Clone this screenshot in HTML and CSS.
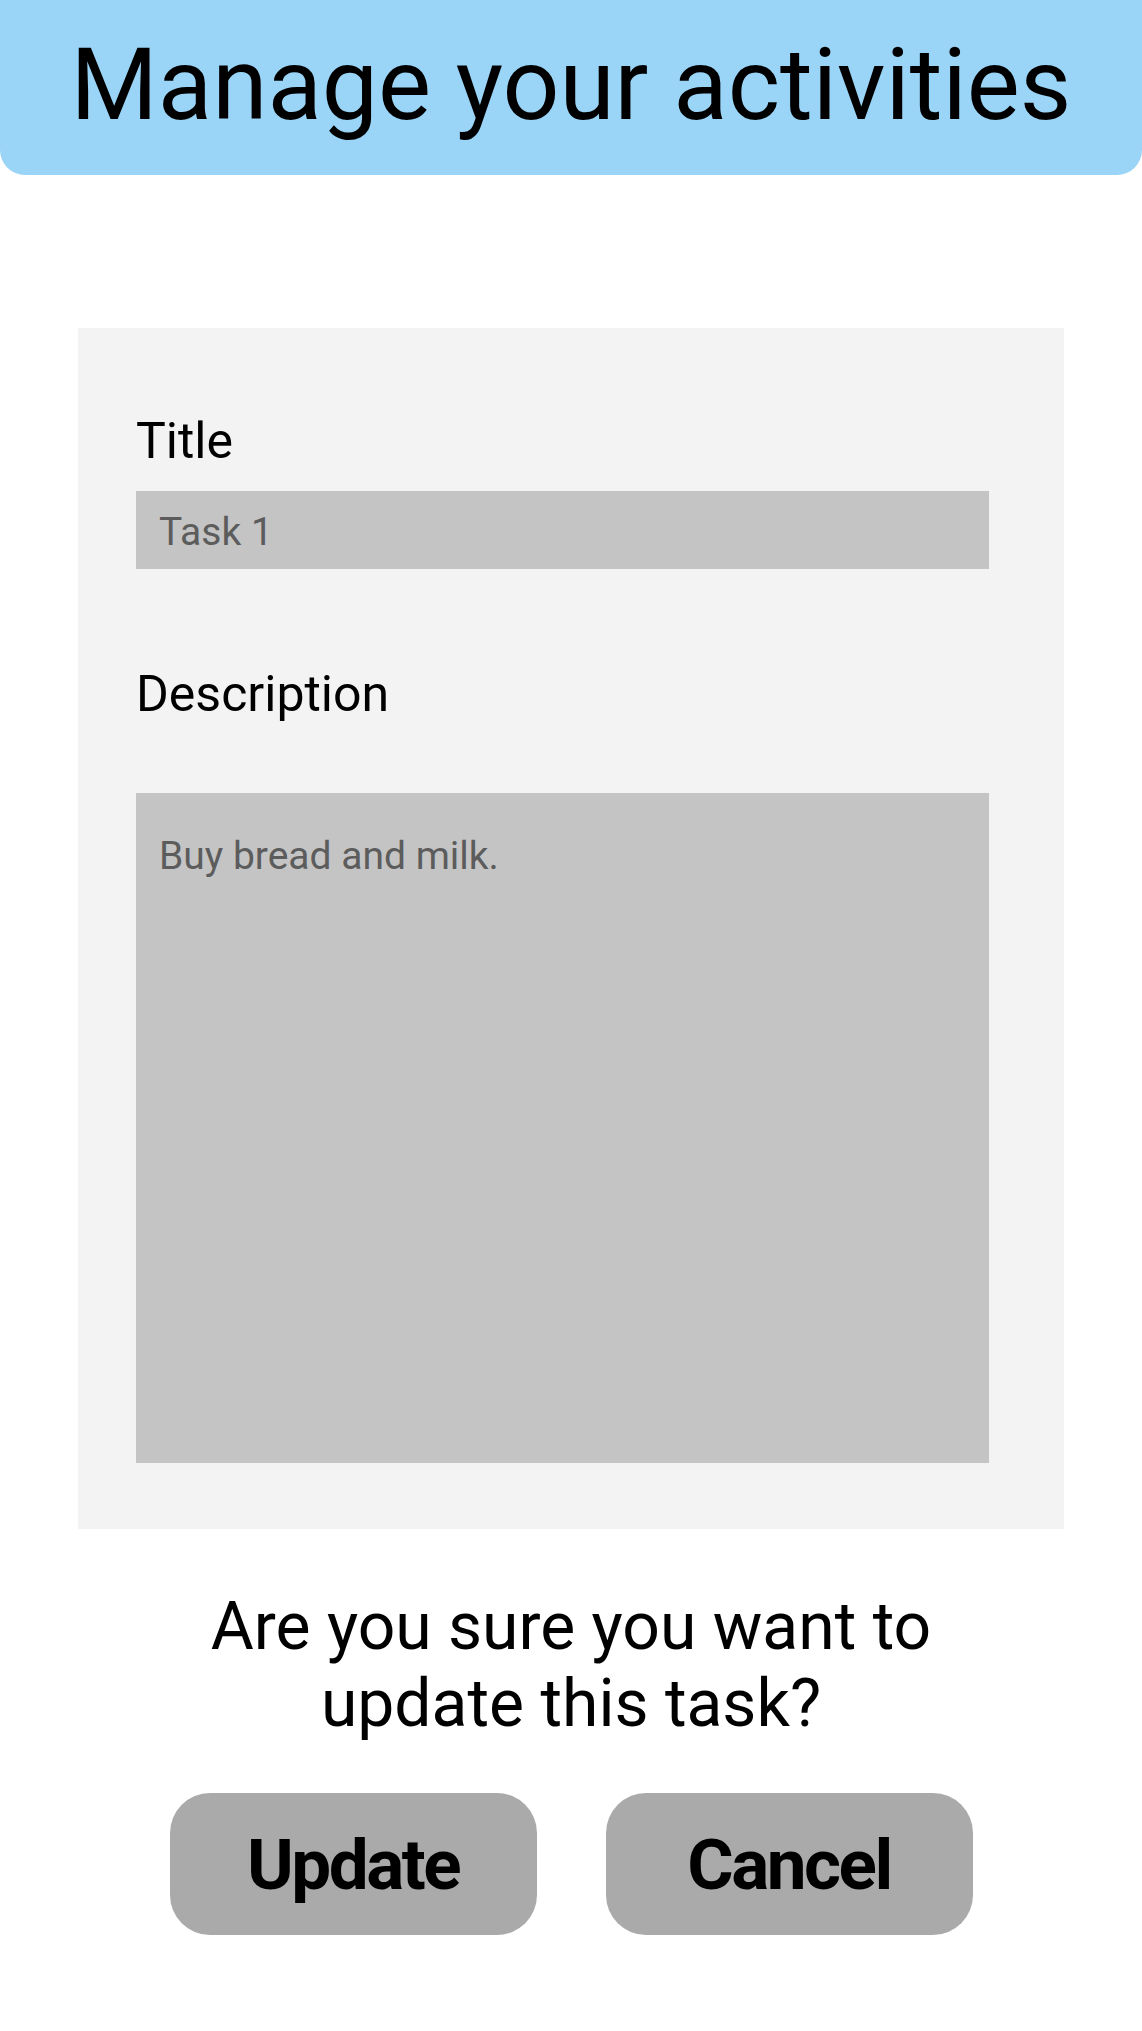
FILE: index.html
```html
<!DOCTYPE html>
<html lang="en">
<head>
<meta charset="utf-8">
<title>Manage your activities</title>
<link rel="stylesheet" href="styles.css">
</head>
<body>
<header class="topbar">
  <h1 class="topbar-title">Manage your activities</h1>
</header>
<main class="page">
  <form class="card">
    <label class="field-label" for="title">Title</label>
    <input class="field-input" id="title" type="text" value="Task 1">
    <label class="field-label field-label--desc" for="desc">Description</label>
    <textarea class="field-area" id="desc">Buy bread and milk.</textarea>
  </form>
  <p class="question">Are you sure you want to<br>update this task?</p>
  <div class="actions">
    <button class="btn" type="button">Update</button>
    <button class="btn" type="button">Cancel</button>
  </div>
</main>
</body>
</html>
```
FILE: styles.css
```css
html, body {
  margin: 0;
  padding: 0;
  background: #ffffff;
}
body {
  font-family: Roboto, "Noto Sans", "Liberation Sans", sans-serif;
  color: #000000;
}
.topbar {
  box-sizing: border-box;
  height: 175px;
  padding-top: 26px;
  background: #9ad5f8;
  border-radius: 0 0 25px 25px;
}
.topbar-title {
  margin: 0;
  font-size: 100px;
  font-weight: 400;
  line-height: normal;
  text-align: center;
}
.page {
  display: flex;
  flex-direction: column;
}
.card {
  display: flex;
  flex-direction: column;
  margin: 153px 78px 0;
  padding: 84px 75px 66px 58px;
  background: #f3f3f3;
}
.field-label {
  display: block;
  font-size: 50px;
  line-height: normal;
}
.field-label--desc {
  margin-top: 96px;
}
.field-input,
.field-area {
  box-sizing: border-box;
  width: 100%;
  border: none;
  outline: none;
  background: #c4c4c4;
  font-family: inherit;
  font-size: 39px;
  line-height: normal;
  color: #5c5c5c;
  margin: 0;
}
.field-input {
  height: 78px;
  margin-top: 21px;
  padding: 3px 23px 0;
}
.field-area {
  display: block;
  height: 670px;
  margin-top: 70px;
  padding: 40px 23px;
  resize: none;
  overflow: hidden;
}
.question {
  margin: 59px 0 0;
  font-size: 66px;
  line-height: 77px;
  text-align: center;
}
.actions {
  display: flex;
  justify-content: center;
  gap: 69px;
  margin-top: 51px;
}
.btn {
  width: 367px;
  height: 142px;
  border: none;
  border-radius: 40px;
  background: #aaaaaa;
  font-family: inherit;
  font-size: 71px;
  font-weight: 700;
  letter-spacing: -2.5px;
  color: #000000;
  padding: 0;
}
```
